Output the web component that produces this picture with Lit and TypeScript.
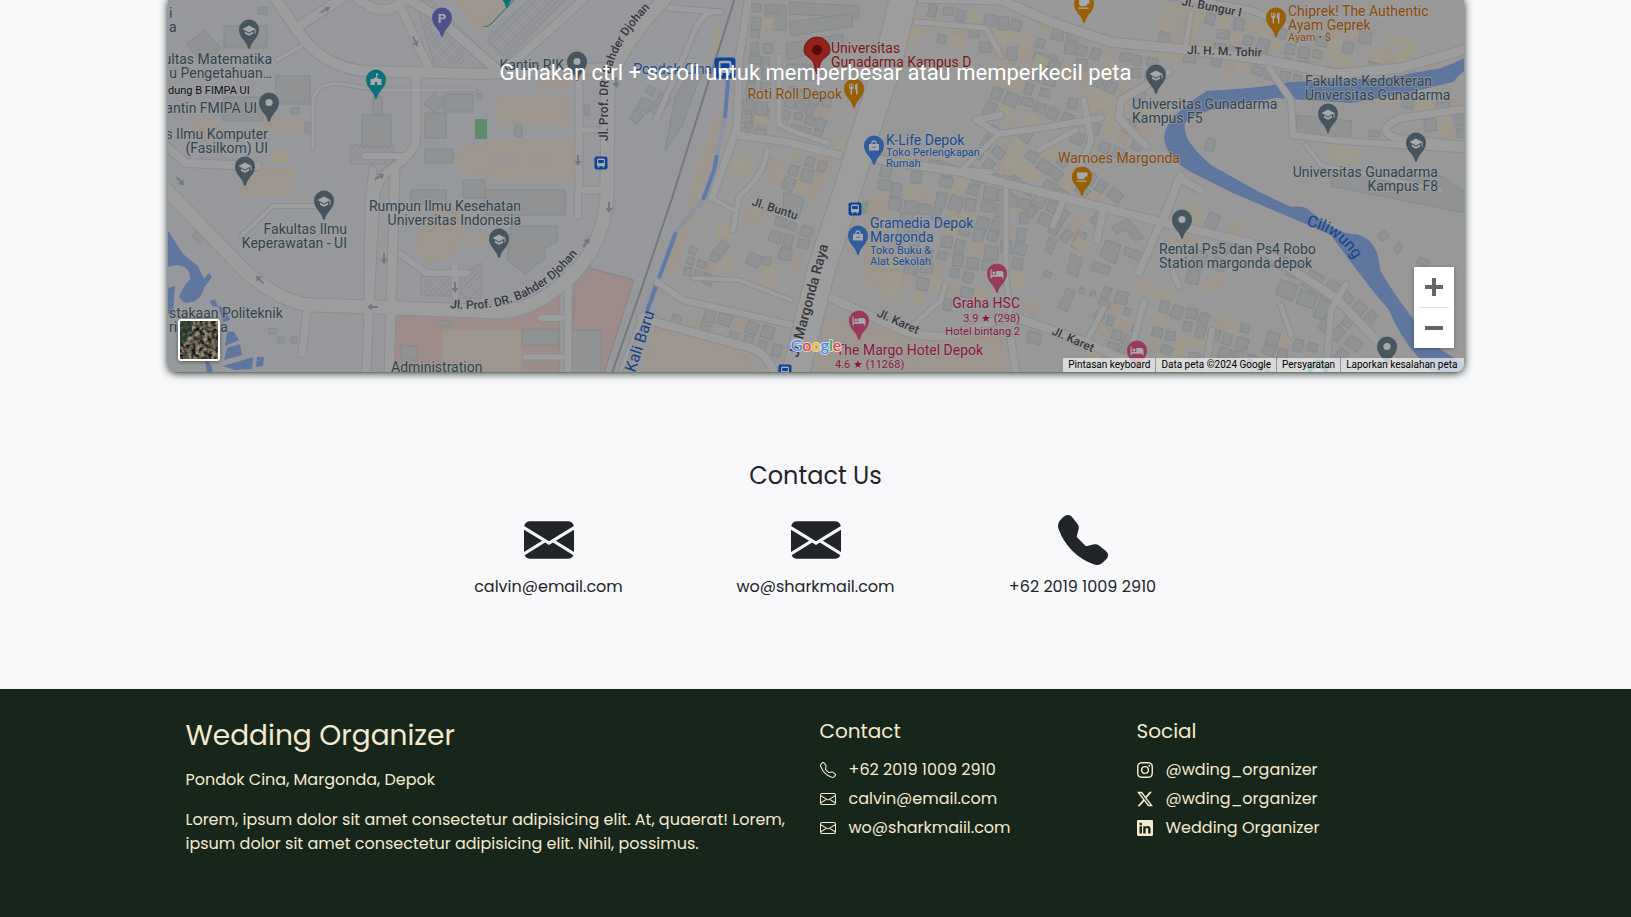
import { LitElement, html, svg, css } from "lit";
import { customElement } from "lit/decorators.js";

type Kind = "grey" | "peach" | "gold";
interface Block { x: number; y: number; cols: number; rows: number; size: number; rot: number; seed: number; gold: number; }
interface Label { x: number; y: number; t: string; c: string; a?: string; s?: string; r?: number; }
interface Pin { x: number; y: number; c: string; i: string; }

const roads: [string, number][] = [
  ["M272 -5 L296 30 Q322 68 365 71 L480 74 L610 68", 10],
  ["M298 26 L348 -6", 9],
  ["M352 -6 Q380 22 404 0 L412 -8", 9],
  ["M398 4 L430 73", 8],
  ["M402 -4 L432 14 L500 73", 9],
  ["M500 73 L560 20 L590 -8", 8],
  ["M415 76 V140 Q414 152 392 168 Q376 176 374 200 L365 376", 8],
  ["M364 156 H402", 6],
  ["M372 170 L368 200 L366 376", 7],
  ["M394 172 L388 376", 9],
  ["M312 148 V100 Q316 82 340 84 L380 90 H474", 3],
  ["M158 182 L245 272 Q282 303 310 305 L372 307 L500 312 Q530 310 560 285 Q602 252 606 196 L607 92 Q612 52 668 -6", 13],
  ["M158 140 L185 163 L256 166", 8],
  ["M306 310 L301 353", 7],
  ["M578 76 V190 H600", 7],
  ["M580 130 H606", 5],
  ["M567 270 V380", 7],
  ["M540 318 H562", 6],
  ["M524 357 H562", 5],
  ["M400 254 L425 273 H466", 6],
  ["M454 266 V296", 7],
  ["M577 216 V192", 6],
  ["M748 -5 L738 60 L736 128 L711 198", 7],
  ["M657 282 L638 325 L616 380", 4],
  ["M668 8 L720 12 Q700 8 690 40 L655 120", 5],
  ["M736 135 L785 142 L838 155", 7],
  ["M766 150 Q764 175 738 196 L732 230", 5],
  ["M711 198 L736 212", 4],
  ["M656 282 L682 300 L795 326", 6],
  ["M640 318 L750 348 Q770 355 775 380", 8],
  ["M778 56 V124 Q790 132 828 143", 5],
  ["M693 278 L738 280 L790 300", 4],
  ["M915 -2 L1000 0 L1050 22 L1110 42 L1190 50 L1265 60 L1335 74 L1400 68 L1470 48", 9],
  ["M915 22 L985 28 L1000 56", 5],
  ["M1165 -5 L1250 10 L1295 30", 6],
  ["M1190 14 L1184 50", 5],
  ["M1168 72 L1120 100 L1118 118 L1145 146", 7],
  ["M1083 100 L1090 140 L1075 180", 6],
  ["M1000 115 L975 120 L998 134 L1040 128 L1100 118", 6],
  ["M998 134 L960 170 L990 172", 5],
  ["M880 160 L960 172 L1040 192 L1160 222 L1250 243 L1335 298 L1385 350 L1410 380", 8],
  ["M1180 176 L1160 222 L1138 272", 7],
  ["M1200 190 L1178 178 L1165 215", 7],
  ["M1038 150 L1075 130", 5],
  ["M1102 212 L1096 240", 7],
  ["M1064 196 L1052 226", 6],
  ["M1345 284 L1330 310 L1325 372", 6],
  ["M830 298 L905 332 Q945 342 965 330 L1010 316 L1080 340 L1150 372", 8],
  ["M905 332 L940 300 L944 285", 5],
  ["M1005 190 V280 L1010 316", 5],
  ["M1010 340 L1016 380", 7],
  ["M1143 302 L1130 350", 6],
  ["M1103 308 L1085 342", 5],
  ["M1178 286 L1172 272", 6],
  ["M1280 306 L1290 335", 5],
  ["M1211 330 L1204 372", 6],
  ["M1268 68 L1290 100 L1292 135 L1330 140 L1470 150", 6],
  ["M1470 108 L1400 118 Q1372 130 1395 138 L1470 146", 7],
  ["M1305 145 L1320 165 L1440 190", 4],
  ["M240 236 L272 206 L330 206", 4],
  ["M276 60 L300 46", 4],
];

const shapes: [string, Kind | "pink" | "lot"][] = [
  ["M223 26 H266 V48 H223 Z", "grey"],
  ["M186 44 L203 30 L220 48 L203 66 Z", "grey"],
  ["M257 7 h9 v7 h-9 Z", "grey"],
  ["M275 76 H309 V104 H275 Z", "grey"],
  ["M222 97 H262 V121 H222 Z", "grey"],
  ["M290 108 h8 v6 h-8 Z", "grey"],
  ["M304 122 h6 v11 h-6 Z", "grey"],
  ["M361 115 H390 V147 H361 Z", "grey"],
  ["M372 96 H381 V115 H372 Z", "grey"],
  ["M242 169 H292 V195 H242 Z", "peach"],
  ["M262 120 H299 V132 H262 Z", "peach"],
  ["M188 128 L203 116 L222 130 L206 142 Z", "peach"],
  ["M272 152 h14 v9 h-14 Z", "gold"],
  ["M423 104 L434 93 L444 102 L434 113 Z", "grey"],
  ["M443 94 H472 V112 H443 Z", "grey"],
  ["M424 113 H445 V138 H424 Z", "grey"],
  ["M424 149 H452 V163 H424 Z", "grey"],
  ["M476 94 h5 v5 h-5 Z", "grey"],
  ["M514 126 h7 v11 h-7 Z", "grey"],
  ["M583 105 h5 v10 h-5 Z", "grey"],
  ["M497 96 H567 V124 H497 Z", "peach"],
  ["M533 88 L578 46 V72 L566 88 Z", "peach"],
  ["M455 160 L465 147 L492 142 V140 H573 V181 H492 V177 L465 172 Z", "peach"],
  ["M493 156 h20 v8 h-20 Z M529 156 h18 v8 h-18 Z", "lot"],
  ["M462 180 H484 V198 H462 Z", "grey"],
  ["M484 190 H564 V215 H484 Z", "grey"],
  ["M410 190 H445 V204 H410 Z", "grey"],
  ["M510 226 H556 V242 L544 248 V258 L524 274 L506 260 Z", "grey"],
  ["M466 234 h21 v10 h-21 Z", "peach"],
  ["M414 240 L430 216 L440 200 L462 214 L460 240 L448 258 L425 263 Z", "peach"],
  ["M191 236 L197 228 L206 236 L199 243 Z", "grey"],
  ["M387 313 L512 317 L558 284 V376 H383 Z", "pink"],
  ["M574 264 L633 280 L602 376 H572 V330 L574 264 Z", "pink"],
  ["M442 330 H520 V376 H442 Z", "peach"],
  ["M521 329 H557 V345 H521 Z", "grey"],
  ["M400 346 h16 v14 h-16 Z", "grey"],
  ["M439 321 h11 v5 h-11 Z", "grey"],
  ["M571 330 H600 V376 H571 Z", "grey"],
  ["M268 328 h7 v6 h-7 Z M277 337 h6 v6 h-6 Z M290 337 h6 v6 h-6 Z", "grey"],
  ["M454 0 H510 L478 30 Z", "peach"],
  ["M764 5 H785 V30 H764 Z", "grey"],
  ["M788 2 L858 6 V18 L788 14 Z", "grey"],
  ["M788 22 L850 14 L852 26 L790 36 Z", "grey"],
  ["M785 44 L842 34 L842 46 L786 60 Z", "grey"],
  ["M786 64 H816 V80 H786 Z", "grey"],
  ["M674 98 L690 68 L700 74 L680 128 L664 150 Z", "grey"],
  ["M740 15 L749 16 L744 41 L736 39 Z", "gold"],
  ["M716 27 L722 29 L714 53 L709 50 Z", "gold"],
  ["M714 116 L726 118 L692 206 L686 200 Z", "peach"],
  ["M688 206 L694 208 L672 276 L664 270 Z", "peach"],
  ["M655 326 L740 350 L760 376 H642 Z", "peach"],
  ["M870 200 L890 206 L882 246 L895 252 L884 290 L862 280 Z", "peach"],
  ["M822 315 L930 342 L918 376 H818 Z", "peach"],
  ["M922 338 L1000 336 L1004 376 H915 Z", "peach"],
  ["M1296 115 L1351 121 L1349 139 L1295 134 Z", "grey"],
  ["M1330 146 L1356 150 L1354 164 L1328 158 Z", "gold"],
  ["M1330 172 L1440 176 L1470 196 V214 L1400 200 L1330 186 Z", "grey"],
  ["M1207 138 l8 2 l-3 12 l-9 -3 Z M1368 131 h11 v6 h-11 Z", "grey"],
  ["M1377 234 l7 -4 l4 8 l-8 3 Z M1393 250 l5 -8 l4 3 l-5 9 Z M1415 262 l4 -5 l10 4 l-4 7 Z", "grey"],
  ["M766 157 L785 163 L784 183 L768 184 Z", "peach"],
  ["M737 155 L752 162 L744 177 L729 170 Z", "gold"],
  ["M839 137 L852 141 L847 159 L834 155 Z", "gold"],
  ["M810 155 L832 161 L827 180 L809 174 Z", "peach"],
  ["M783 192 L803 198 L798 218 L781 214 Z", "grey"],
  ["M747 203 L764 207 L758 227 L743 220 Z", "peach"],
  ["M719 224 L728 225 L726 240 L717 236 Z", "gold"],
  ["M722 239 L729 246 L718 260 L711 252 Z", "grey"],
  ["M724 258 L733 259 L730 273 L722 272 Z", "gold"],
  ["M763 265 L775 269 L770 287 L759 282 Z", "gold"],
  ["M1076 230 L1086 234 L1079 251 L1070 247 Z", "grey"],
  ["M1105 240 L1120 245 L1114 264 L1099 256 Z", "grey"],
  ["M1070 254 L1082 258 L1076 277 L1066 273 Z", "grey"],
  ["M1092 261 L1110 267 L1107 275 L1090 270 Z", "grey"],
  ["M1066 288 L1074 292 L1066 312 L1057 308 Z", "grey"],
  ["M1124 247 L1143 253 L1140 261 L1123 255 Z", "grey"],
  ["M1048 237 L1056 240 L1050 255 L1044 251 Z", "grey"],
  ["M1111 227 L1127 219 L1143 238 L1134 241 L1124 230 L1115 234 Z", "grey"],
  ["M1044 270 l7 3 l-2 5 l-7 -3 Z M1080 287 l4 2 l-2 5 l-4 -2 Z M1091 290 l4 2 l-2 5 l-4 -2 Z", "grey"],
  ["M1137 281 L1173 296 L1170 301 L1135 290 Z", "gold"],
  ["M1027 331 L1041 334 L1039 345 L1026 342 Z", "grey"],
  ["M1027 300 L1038 304 L1033 315 L1023 311 Z", "peach"],
  ["M1007 272 H1022 V287 H1007 Z", "gold"],
];

const blocks: Block[] = [
  { x: 752, y: 4, cols: 2, rows: 10, size: 13, rot: 4, seed: 3, gold: 0.1 },
  { x: 788, y: 86, cols: 4, rows: 4, size: 12, rot: 14, seed: 21, gold: 0 },
  { x: 742, y: 100, cols: 2, rows: 3, size: 14, rot: 6, seed: 5, gold: 0.3 },
  { x: 794, y: 152, cols: 3, rows: 3, size: 13, rot: 20, seed: 8, gold: 0.2 },
  { x: 762, y: 212, cols: 4, rows: 4, size: 14, rot: 18, seed: 13, gold: 0.12 },
  { x: 690, y: 246, cols: 3, rows: 3, size: 11, rot: 16, seed: 17, gold: 0 },
  { x: 676, y: 300, cols: 8, rows: 2, size: 15, rot: 16, seed: 19, gold: 0.05 },
  { x: 915, y: 2, cols: 18, rows: 3, size: 14, rot: 10, seed: 31, gold: 0.2 },
  { x: 1008, y: 44, cols: 11, rows: 5, size: 15, rot: 20, seed: 37, gold: 0.2 },
  { x: 1168, y: -10, cols: 20, rows: 5, size: 14, rot: 12, seed: 41, gold: 0.35 },
  { x: 1000, y: 112, cols: 10, rows: 5, size: 15, rot: 34, seed: 43, gold: 0.1 },
  { x: 884, y: 150, cols: 9, rows: 4, size: 15, rot: 12, seed: 47, gold: 0.15 },
  { x: 900, y: 212, cols: 7, rows: 6, size: 15, rot: 12, seed: 53, gold: 0.15 },
  { x: 1006, y: 196, cols: 2, rows: 5, size: 15, rot: 8, seed: 59, gold: 0.2 },
  { x: 1104, y: 286, cols: 4, rows: 3, size: 13, rot: 20, seed: 61, gold: 0.1 },
  { x: 1100, y: 325, cols: 3, rows: 3, size: 13, rot: 20, seed: 63, gold: 0.2 },
  { x: 1190, y: 205, cols: 3, rows: 4, size: 20, rot: 20, seed: 67, gold: 0.15 },
  { x: 1160, y: 300, cols: 12, rows: 5, size: 14, rot: 16, seed: 71, gold: 0.25 },
  { x: 1270, y: 250, cols: 4, rows: 2, size: 22, rot: 26, seed: 73, gold: 0.1 },
  { x: 1345, y: 290, cols: 3, rows: 4, size: 16, rot: 38, seed: 79, gold: 0.2 },
  { x: 1420, y: 105, cols: 3, rows: 3, size: 15, rot: -10, seed: 83, gold: 0.3 },
  { x: 648, y: 85, cols: 2, rows: 3, size: 14, rot: 30, seed: 91, gold: 0 },
];

const houses = (b: Block) => {
  let s = b.seed * 9301;
  const next = () => { s = (s * 9301 + 49297) % 233280; return s / 233280; };
  const out = [];
  for (let r = 0; r < b.rows; r++) {
    for (let c = 0; c < b.cols; c++) {
      const skip = next() < 0.16;
      const w = Math.round(b.size * (0.55 + next() * 0.35));
      const h = Math.round(b.size * (0.55 + next() * 0.4));
      const n = next();
      const kind: Kind = n < b.gold ? "gold" : n < b.gold + 0.16 ? "peach" : "grey";
      const turn = Math.round(next() * 16 - 8);
      if (skip) continue;
      const px = c * b.size, py = r * b.size;
      out.push(svg`<rect class=${kind} x=${px} y=${py} width=${w} height=${h} transform="rotate(${turn} ${px} ${py})"></rect>`);
    }
  }
  return svg`<g transform="translate(${b.x} ${b.y}) rotate(${b.rot})">${out}</g>`;
};

const SLATE = "slate", ORANGE = "orange", BLUE = "blue", PINK = "rose", RED = "red", ROAD = "road";

const labels: Label[] = [
  { x: 168, y: 18, t: "i", c: SLATE }, { x: 168, y: 32, t: "a", c: SLATE },
  { x: 271, y: 64, t: "ultas Matematika", c: SLATE, a: "end" },
  { x: 271, y: 78, t: "u Pengetahuan…", c: SLATE, a: "end" },
  { x: 167, y: 94, t: "dung B FIMPA UI", c: "black", s: "s11" },
  { x: 256, y: 113, t: "antin FMIPA UI", c: SLATE, a: "end" },
  { x: 267, y: 139, t: "s Ilmu Komputer", c: SLATE, a: "end" },
  { x: 267, y: 153, t: "(Fasilkom) UI", c: SLATE, a: "end" },
  { x: 346, y: 234, t: "Fakultas Ilmu", c: SLATE, a: "end" },
  { x: 346, y: 248, t: "Keperawatan - UI", c: SLATE, a: "end" },
  { x: 520, y: 211, t: "Rumpun Ilmu Kesehatan", c: SLATE, a: "end" },
  { x: 520, y: 225, t: "Universitas Indonesia", c: SLATE, a: "end" },
  { x: 168, y: 318, t: "stakaan Politeknik", c: SLATE },
  { x: 168, y: 332, t: "ri Jakarta", c: SLATE },
  { x: 390, y: 372, t: "Administration", c: SLATE },
  { x: 563, y: 70, t: "Kantin RIK", c: SLATE, a: "end" },
  { x: 711, y: 74, t: "Pondok Cina", c: BLUE, a: "end" },
  { x: 830, y: 53, t: "Universitas", c: RED },
  { x: 830, y: 67, t: "Gunadarma Kampus D", c: RED },
  { x: 841, y: 99, t: "Roti Roll Depok", c: ORANGE, a: "end" },
  { x: 885, y: 145, t: "K-Life Depok", c: BLUE },
  { x: 885, y: 156, t: "Toko Perlengkapan", c: BLUE, s: "s11" },
  { x: 885, y: 167, t: "Rumah", c: BLUE, s: "s11" },
  { x: 869, y: 228, t: "Gramedia Depok", c: BLUE },
  { x: 869, y: 242, t: "Margonda", c: BLUE },
  { x: 869, y: 254, t: "Toko Buku &", c: BLUE, s: "s11" },
  { x: 869, y: 265, t: "Alat Sekolah", c: BLUE, s: "s11" },
  { x: 1019, y: 308, t: "Graha HSC", c: PINK, a: "end" },
  { x: 1019, y: 322, t: "3.9 ★ (298)", c: PINK, a: "end", s: "s11" },
  { x: 1019, y: 335, t: "Hotel bintang 2", c: PINK, a: "end", s: "s11" },
  { x: 835, y: 355, t: "The Margo Hotel Depok", c: PINK },
  { x: 834, y: 368, t: "4.6 ★ (11268)", c: PINK, s: "s11" },
  { x: 1287, y: 16, t: "Chiprek! The Authentic", c: ORANGE },
  { x: 1287, y: 30, t: "Ayam Geprek", c: ORANGE },
  { x: 1287, y: 41, t: "Ayam • $", c: ORANGE, s: "s11" },
  { x: 1057, y: 163, t: "Warnoes Margonda", c: ORANGE },
  { x: 1131, y: 109, t: "Universitas Gunadarma", c: SLATE },
  { x: 1131, y: 123, t: "Kampus F5", c: SLATE },
  { x: 1304, y: 86, t: "Fakultas Kedokteran", c: SLATE },
  { x: 1304, y: 100, t: "Universitas Gunadarma", c: SLATE },
  { x: 1437, y: 177, t: "Universitas Gunadarma", c: SLATE, a: "end" },
  { x: 1437, y: 191, t: "Kampus F8", c: SLATE, a: "end" },
  { x: 1158, y: 254, t: "Rental Ps5 dan Ps4 Robo", c: SLATE },
  { x: 1158, y: 268, t: "Station margonda depok", c: SLATE },
  { x: 1186, y: 54, t: "Jl. H. M. Tohir", c: ROAD, s: "s12", r: 2 },
  { x: 1180, y: 5, t: "Jl. Bungur I", c: ROAD, s: "s12", r: 11 },
  { x: 750, y: 205, t: "Jl. Buntu", c: ROAD, s: "s12", r: 18 },
  { x: 875, y: 316, t: "Jl. Karet", c: ROAD, s: "s12", r: 24 },
  { x: 1050, y: 334, t: "Jl. Karet", c: ROAD, s: "s12", r: 24 },
  { x: 1240, y: 364, t: "Jl. Karet", c: ROAD, s: "s12", r: 24 },
];

const pins: Pin[] = [
  { x: 248, y: 48, c: SLATE, i: "cap" }, { x: 268, y: 121, c: SLATE, i: "dot" },
  { x: 244, y: 185, c: SLATE, i: "cap" }, { x: 323, y: 219, c: SLATE, i: "cap" },
  { x: 375, y: 98, c: "teal", i: "school" }, { x: 441, y: 36, c: "indigo", i: "park" },
  { x: 506, y: 7, c: "teal", i: "none" }, { x: 576, y: 80, c: SLATE, i: "dot" },
  { x: 498, y: 257, c: SLATE, i: "cap" }, { x: 853, y: 107, c: ORANGE, i: "fork" },
  { x: 873, y: 164, c: BLUE, i: "bag" }, { x: 857, y: 254, c: BLUE, i: "bag" },
  { x: 996, y: 292, c: PINK, i: "bed" }, { x: 858, y: 339, c: PINK, i: "bed" },
  { x: 1136, y: 369, c: PINK, i: "bed" }, { x: 1083, y: 22, c: ORANGE, i: "cup" },
  { x: 1275, y: 36, c: ORANGE, i: "fork" }, { x: 1081, y: 195, c: ORANGE, i: "cup" },
  { x: 1155, y: 93, c: SLATE, i: "cap" }, { x: 1327, y: 132, c: SLATE, i: "cap" },
  { x: 1415, y: 161, c: SLATE, i: "cap" }, { x: 1181, y: 238, c: SLATE, i: "dot" },
  { x: 1386, y: 365, c: SLATE, i: "dot" }, { x: 1317, y: 388, c: "teal", i: "school" },
];

const glyph = (i: string) => {
  switch (i) {
    case "cap": return svg`<path d="M-6.500 -19 L0 -22.500 L6.500 -19 L0 -15.500 Z M-4 -16.500 L0 -14.200 L4 -16.500 V-14.300 L0 -12.200 L-4 -14.300 Z M5.500 -19 H6.500 V-14.500 H5.500 Z"></path>`;
    case "dot": return svg`<circle cx="0" cy="-18.500" r="3.600"></circle>`;
    case "park": return svg`<text class="park" x="0" y="-13.500" text-anchor="middle">P</text>`;
    case "school": return svg`<path d="M-5.500 -13 V-19 H-3 L0 -21 V-25 L3 -23.500 L1 -22.500 V-21 L3 -19 H5.500 V-13 H1.200 V-16 H-1.200 V-13 Z"></path>`;
    case "fork": return svg`<path d="M-4.800 -23.500 H-3.900 V-20 H-3.100 V-23.500 H-2.200 V-20 H-1.400 V-23.500 H-0.500 V-19.500 Q-0.600 -18 -2 -17.800 V-12.500 H-3.400 V-17.800 Q-4.800 -18 -4.800 -19.500 Z M2 -12.500 V-17.500 H0.900 V-21 Q1.200 -23.400 3.500 -23.700 V-12.500 Z"></path>`;
    case "cup": return svg`<path d="M-5 -22.500 H5.500 V-18.500 H3.500 Q3.200 -16 0 -15.800 H-2 Q-4.800 -16 -5 -18.500 Z M-5.500 -14.500 H4.500 V-13.300 H-5.500 Z"></path>`;
    case "bag": return svg`<path fill-rule="evenodd" d="M-5 -20 H-2.800 Q-2.800 -23.800 0 -23.800 Q2.800 -23.800 2.800 -20 H5 V-13.500 H-5 Z M-1.600 -20 H1.600 Q1.600 -22.500 0 -22.500 Q-1.600 -22.500 -1.600 -20 Z M-2.500 -18 Q0 -14 2.500 -18 Q0 -16 -2.500 -18 Z"></path>`;
    case "bed": return svg`<path d="M-6.500 -22.500 H-5.300 V-17 H-0.800 V-21 H4 Q6.500 -21 6.500 -18 V-13.500 H5.300 V-15.300 H-5.300 V-13.500 H-6.500 Z"></path><circle cx="-3" cy="-19" r="1.600"></circle>`;
    default: return null;
  }
};

const pin = (p: Pin) => svg`<g class="pin" transform="translate(${p.x} ${p.y})">
  <path class="${p.c}" d="M0 1 C-0.800 1 -1.200 0 -1.500 -1.500 C-2.800 -7 -10 -10.500 -10 -18.500 A10 10 0 0 1 10 -18.500 C10 -10.500 2.800 -7 1.500 -1.500 C1.200 0 0.800 1 0 1 Z"></path>
  <g class="glyph">${glyph(p.i)}</g></g>`;

const stop = (x: number, y: number, s: number) => svg`<g transform="translate(${x} ${y}) scale(${s})">
  <rect class="stop" x="-6.500" y="-6.500" width="13" height="13" rx="2"></rect>
  <path class="stopicon" fill-rule="evenodd" d="M-4 -3 Q-4 -4.500 -2.500 -4.500 H2.500 Q4 -4.500 4 -3 V3.200 H3 V4.500 H1.600 V3.200 H-1.600 V4.500 H-3 V3.200 H-4 Z M-2.800 -3 V0 H2.800 V-3 Z"></path></g>`;

const arrow = (x: number, y: number, r: number) =>
  svg`<path class="arrow" transform="translate(${x} ${y}) rotate(${r})" d="M-5 -1 H1 V-3.500 L6 0 L1 3.500 V1 H-5 Z"></path>`;

const mapDrawing = () => svg`
  <defs>
    <pattern id="hatch" width="4" height="4" patternUnits="userSpaceOnUse" patternTransform="rotate(-45)">
      <path d="M0 2 H4" stroke="#85878b" stroke-width="0.700"></path>
    </pattern>
    <path id="bahder" d="M449 308 Q504 314 544 285 Q564 272 591 235"></path>
    <path id="bahderUp" d="M607 141 V98 Q605 50 655 2"></path>
    <path id="ciliwung" d="M1305 226 Q1341 232 1359 270"></path>
  </defs>
  <rect class="urban" x="160" y="0" width="1310" height="372"></rect>
  <path class="campus" d="M160 0 H745 L736 60 L690 190 L630 376 H160 Z"></path>
  <path class="park-line" d="M456 -2 L480 24 Q484 29 490 24 L515 -2"></path>
  <path class="hatch" d="M414 0 L430 0 L494 62 L470 70 L435 70 Z M485 40 L530 -2 H566 L506 60 Z M350 145 H392 V164 H350 Z M420 275 H454 V296 H420 Z M460 276 L480 262 V298 H460 Z"></path>
  ${shapes.map(([d, k]) => svg`<path class=${k} d=${d}></path>`)}
  ${blocks.map(houses)}
  <path class="green" d="M474 119 H486 V139 H474 Z"></path>
  <path class="green" d="M862 202 L868 200 L866 214 L860 214 Z" opacity="0.400"></path>
  <path class="water" d="M160 222 L168 232 L182 254 L197 266 L203 279 L208 273 L211 277 L203 288 Q199 303 184 303 L178 297 Q183 284 189 280 Q190 266 176 265 L160 268 Z M160 290 L174 286 L172 312 L160 318 Z M209 301 L214 299 L217 307 L211 306 Z M217 305 L225 310 L229 320 L222 322 Z M226 331 L233 332 L238 340 L224 346 Z M226 348 L239 344 L241 355 L223 360 Z M222 366 L252 357 L251 369 L234 370 Z M256 357 L263 357 L262 366 L255 367 Z M204 360 Q213 364 211 374 H206 Z"></path>
  <path class="pool" d="M1470 55 L1455 62 L1440 68 L1385 78 L1290 82 Q1262 88 1206 91 Q1165 116 1163 137 Q1165 158 1190 172 L1232 193 L1300 222 L1330 235 Q1362 280 1388 310 Q1402 345 1432 372 H1470 V366 Q1430 350 1410 316 Q1390 290 1379 270 Q1378 240 1355 234 Q1340 236 1310 212 Q1305 205 1290 207 L1258 192 L1210 165 Q1180 140 1184 123 Q1192 113 1220 108 L1275 98 L1350 103 Q1400 95 1452 82 Q1460 72 1470 66 Z"></path>
  ${roads.map(([d, w]) => svg`<path class="casing" d=${d} stroke-width=${w + 2}></path>`)}
  ${roads.map(([d, w]) => svg`<path class="street" d=${d} stroke-width=${w}></path>`)}
  <path class="canal" d="M727 80 L724 118 M716 155 L713 170 L702 200 M675 232 L658 278 M655 286 L645 314"></path>
  <path class="canal faint" d="M724 118 L716 155 M702 200 L675 232"></path>
  <path class="casing" d="M903 -5 L888 60 L862 140 L845 195 L820 270 L793 380" stroke-width="29"></path>
  <path class="avenue" d="M903 -5 L888 60 L862 140 L845 195 L820 270 L793 380" stroke-width="27"></path>
  <path class="rail" d="M734 -2 L708 80 L672 195 L640 290 L610 376"></path>
  ${[[324, 10, -30], [414, 41, 65], [378, 177, -30], [577, 160, 90], [179, 181, 48], [259, 280, -135], [383, 258, 90], [372, 307, 180], [454, 287, 90], [585, 243, -55], [608, 207, 90], [615, 82, 90]].map(([x, y, r]) => arrow(x, y, r))}
  ${stop(600, 163, 1)}${stop(854, 209, 1)}${stop(784, 371, 1)}${stop(724, 68, 1.6)}
  ${labels.map((l) => svg`<text class="label ${l.c} ${l.s ?? "s14"}" x=${l.x} y=${l.y} text-anchor=${l.a ?? "start"} transform="rotate(${l.r ?? 0} ${l.x} ${l.y})">${l.t}</text>`)}
  <text class="label road s12"><textPath href="#bahder">Jl. Prof. DR. Bahder Djohan</textPath></text>
  <text class="label road s12"><textPath href="#bahderUp">Jl. Prof. DR. Bahder Djohan</textPath></text>
  <text class="label water-name s16"><textPath href="#ciliwung">Ciliwung</textPath></text>
  <text class="label water-name s16" transform="translate(634 373) rotate(-72)">Kali Baru</text>
  <text class="label road s14" transform="translate(797 358) rotate(-75)">Jl. Margonda Raya</text>
  ${pins.map(pin)}
  <path class="main-pin" d="M816 74 C815 74 814 66 812 62 C809 57 803 56 803 50 A13 13 0 0 1 829 50 C829 56 823 57 820 62 C818 66 817 74 816 74 Z"></path>
  <circle class="main-dot" cx="816" cy="50" r="5"></circle>`;

const icon = (name: string, cls: string) => {
  const d: Record<string, string> = {
    mailFill: "M.05 3.555A2 2 0 0 1 2 2h12a2 2 0 0 1 1.950 1.555L8 8.414zM0 4.697v7.104l5.803-3.558zM6.761 8.830l-6.570 4.027A2 2 0 0 0 2 14h12a2 2 0 0 0 1.808-1.144l-6.570-4.027L8 9.586zm3.436-.586L16 11.801V4.697z",
    phoneFill: "M1.885.511a1.745 1.745 0 0 1 2.610.163L6.290 2.980c.329.423.445.974.315 1.494l-.547 2.190a.680.680 0 0 0 .178.643l2.457 2.457a.680.680 0 0 0 .644.178l2.189-.547a1.750 1.750 0 0 1 1.494.315l2.306 1.794c.829.645.905 1.870.163 2.611l-1.034 1.034c-.740.740-1.846 1.065-2.877.702a18.600 18.600 0 0 1-7.010-4.420 18.600 18.600 0 0 1-4.420-7.009c-.362-1.030-.037-2.137.703-2.877z",
    phone: "M3.654 1.328a.678.678 0 0 0-1.015-.063L1.605 2.300c-.483.484-.661 1.169-.450 1.770a17.600 17.600 0 0 0 4.168 6.608 17.600 17.600 0 0 0 6.608 4.168c.601.211 1.286.033 1.770-.450l1.034-1.034a.678.678 0 0 0-.063-1.015l-2.307-1.794a.680.680 0 0 0-.580-.122l-2.190.547a1.750 1.750 0 0 1-1.657-.459L5.482 8.062a1.750 1.750 0 0 1-.460-1.657l.548-2.190a.680.680 0 0 0-.122-.580zM1.884.511a1.745 1.745 0 0 1 2.612.163L6.290 2.980c.329.423.445.974.315 1.494l-.547 2.190a.680.680 0 0 0 .178.643l2.457 2.457a.680.680 0 0 0 .644.178l2.189-.547a1.750 1.750 0 0 1 1.494.315l2.306 1.794c.829.645.905 1.870.163 2.611l-1.034 1.034c-.740.740-1.846 1.065-2.877.702a18.600 18.600 0 0 1-7.010-4.420 18.600 18.600 0 0 1-4.420-7.009c-.362-1.030-.037-2.137.703-2.877z",
    mail: "M0 4a2 2 0 0 1 2-2h12a2 2 0 0 1 2 2v8a2 2 0 0 1-2 2H2a2 2 0 0 1-2-2zm2-1a1 1 0 0 0-1 1v.217l7 4.200 7-4.200V4a1 1 0 0 0-1-1zm13 2.383-4.708 2.825L15 11.105zm-.034 6.876-5.640-3.471L8 9.583l-1.326-.795-5.640 3.470A1 1 0 0 0 2 13h12a1 1 0 0 0 .966-.741M1 11.105l4.708-2.897L1 5.383z",
    instagram: "M8 0C5.829 0 5.556.01 4.703.048 3.850.088 3.269.222 2.760.420a3.900 3.900 0 0 0-1.417.923A3.900 3.900 0 0 0 .420 2.760C.222 3.268.087 3.850.048 4.700.010 5.555 0 5.827 0 8.001c0 2.172.010 2.444.048 3.297.040.852.174 1.433.372 1.942.205.526.478.972.923 1.417.444.445.890.719 1.416.923.510.198 1.090.333 1.942.372C5.555 15.990 5.827 16 8 16s2.444-.010 3.298-.048c.851-.040 1.434-.174 1.943-.372a3.900 3.900 0 0 0 1.416-.923c.445-.445.718-.891.923-1.417.197-.509.332-1.090.372-1.942C15.990 10.445 16 10.173 16 8s-.010-2.445-.048-3.299c-.040-.851-.175-1.433-.372-1.941a3.900 3.900 0 0 0-.923-1.417A3.900 3.900 0 0 0 13.240.420c-.510-.198-1.092-.333-1.943-.372C10.443.010 10.172 0 7.998 0zm-.717 1.442h.718c2.136 0 2.389.007 3.232.046.780.035 1.204.166 1.486.275.373.145.640.319.920.599s.453.546.598.920c.110.281.240.705.275 1.485.039.843.047 1.096.047 3.231s-.008 2.389-.047 3.232c-.035.780-.166 1.203-.275 1.485a2.500 2.500 0 0 1-.599.919c-.280.280-.546.453-.920.598-.280.110-.704.240-1.485.276-.843.038-1.096.047-3.232.047s-2.390-.009-3.233-.047c-.780-.036-1.203-.166-1.485-.276a2.500 2.500 0 0 1-.920-.598 2.500 2.500 0 0 1-.600-.920c-.109-.281-.240-.705-.275-1.485-.038-.843-.046-1.096-.046-3.233s.008-2.388.046-3.231c.036-.780.166-1.204.276-1.486.145-.373.319-.640.599-.920s.546-.453.920-.598c.282-.110.705-.240 1.485-.276.738-.034 1.024-.044 2.515-.045zm4.988 1.328a.960.960 0 1 0 0 1.920.960.960 0 0 0 0-1.920m-4.270 1.122a4.109 4.109 0 1 0 0 8.217 4.109 4.109 0 0 0 0-8.217m0 1.441a2.667 2.667 0 1 1 0 5.334 2.667 2.667 0 0 1 0-5.334",
    x: "M12.600.750h2.454l-5.360 6.142L16 15.250h-4.937l-3.867-5.070-4.425 5.070H.316l5.733-6.570L0 .750h5.063l3.495 4.633L12.601.750Zm-.860 13.028h1.360L4.323 2.145H2.865z",
    linkedin: "M0 1.146C0 .513.526 0 1.175 0h13.650C15.474 0 16 .513 16 1.146v13.708c0 .633-.526 1.146-1.175 1.146H1.175C.526 16 0 15.487 0 14.854zm4.943 12.248V6.169H2.542v7.225zm-1.200-8.212c.837 0 1.358-.554 1.358-1.248-.015-.709-.520-1.248-1.342-1.248S2.400 3.226 2.400 3.934c0 .694.521 1.248 1.327 1.248zm4.908 8.212V9.359c0-.216.016-.432.080-.586.173-.431.568-.878 1.232-.878.869 0 1.216.662 1.216 1.634v3.865h2.401V9.250c0-2.220-1.184-3.252-2.764-3.252-1.274 0-1.845.700-2.165 1.193v.025h-.016l.016-.025V6.169h-2.400c.030.678 0 7.225 0 7.225z",
  };
  return html`<svg class=${cls} viewBox="0 0 16 16" fill="currentColor" aria-hidden="true"><path d=${d[name]}></path></svg>`;
};

@customElement("map-view")
class MapView extends LitElement {
  static styles = css`
    :host { display: block; position: relative; overflow: hidden; height: 372px; font-family: Roboto, sans-serif; border-bottom: 1px solid #718072; border-radius: 0 0 8px 8px; box-shadow: 0 0 8px #14241b; }
    .map { display: block; width: 100%; height: 100%; }
    .urban { fill: #989898; }
    .campus { fill: #96989b; }
    .casing { fill: none; stroke: #8b8d91; stroke-linecap: round; stroke-linejoin: round; }
    .street, .avenue { fill: none; stroke: #9d9d9e; stroke-linecap: round; stroke-linejoin: round; }
    .grey { fill: #909293; stroke: #868a8c; stroke-width: 1px; }
    .peach { fill: #9c968f; stroke: #a29382; stroke-width: 1px; }
    .gold { fill: #9c9990; stroke: #a89a74; stroke-width: 1px; }
    .pink { fill: #9d8c89; stroke: #917f7d; stroke-width: 1px; }
    .lot { fill: #97979a; stroke: #a3917d; stroke-width: 1px; }
    .hatch { fill: url(#hatch); stroke: #8a8c91; stroke-width: 1px; }
    .green { fill: #5f8b6a; }
    .water, .pool { fill: #5f769f; }
    .canal { fill: none; stroke: #6079a8; stroke-width: 4px; }
    .faint { stroke: #8c92a2; }
    .rail { fill: none; stroke: #77787c; stroke-width: 2px; }
    .park-line { fill: none; stroke: #1e7439; stroke-width: 1px; }
    .arrow { fill: #74777f; }
    .label { paint-order: stroke; stroke: #a0a2a4; stroke-opacity: 0.6; stroke-width: 2px; stroke-linejoin: round; }
    .s11 { font-size: 11px; }
    .s12 { font-size: 12px; }
    .s14 { font-size: 14px; }
    .s16 { font-size: 16px; }
    .label.road { fill: #36383c; font-weight: 500; }
    .label.black { fill: #111111; }
    .water-name { fill: #164384; stroke-width: 0; }
    .slate { fill: #33444d; }
    .orange { fill: #8c4b05; }
    .blue { fill: #174c93; }
    .rose { fill: #8a1740; }
    .red { fill: #7f1515; }
    .pin .slate { fill: #46555e; }
    .pin .orange { fill: #985f05; }
    .pin .blue { fill: #305c9c; }
    .pin .rose { fill: #983a5c; }
    .pin .teal { fill: #0b717b; }
    .pin .indigo { fill: #4f508a; }
    .glyph { fill: #a6a9ab; }
    .park { font-size: 13px; font-weight: 700; }
    .stop { fill: #0c4394; }
    .stopicon { fill: #a6a9ab; }
    .main-pin { fill: #8f231e; stroke: #7a1814; stroke-width: 1px; }
    .main-dot { fill: #560b0b; }
    .hint { position: absolute; inset: 57px 0 auto; margin: 0; text-align: center; font-size: 22px; line-height: 32px; color: #ffffff; }
    .satellite { position: absolute; left: 10px; bottom: 11px; width: 42px; height: 42px; padding: 0; border: 2px solid #ffffff; border-radius: 3px; background: #4b4a3f; overflow: hidden; box-shadow: 0 1px 4px rgba(0, 0, 0, 0.4); cursor: pointer; }
    .satellite svg { display: block; width: 100%; height: 100%; }
    .zoom { position: absolute; right: 10px; bottom: 24px; width: 40px; display: flex; flex-direction: column; background: #ffffff; box-shadow: 0 1px 4px rgba(0, 0, 0, 0.3); }
    .zoom button { height: 40px; padding: 0; border: 0; background: none; cursor: pointer; display: grid; place-items: center; }
    .zoom svg { width: 18px; height: 18px; fill: #666666; }
    .zoom hr { width: 30px; height: 1px; margin: 0 auto; border: 0; background: #e0e0e0; }
    .logo { position: absolute; left: 0; right: 0; bottom: 13px; margin: 0 auto; width: 50px; height: 24px; overflow: visible; font: 500 16px Lato, sans-serif; }
    .logo text { paint-order: stroke; stroke: #d5d7da; stroke-width: 2px; }
    .g-blue { fill: #4285f4; }
    .g-red { fill: #ea4335; }
    .g-yellow { fill: #fbbc04; }
    .g-green { fill: #34a853; }
    .legal { position: absolute; right: 0; bottom: 0; display: flex; gap: 1px; font-size: 10px; line-height: 14px; }
    .legal > * { padding: 0 5px; border: 0; margin: 0; background: rgba(245, 245, 245, 0.7); color: #000000; font: inherit; text-decoration: none; white-space: nowrap; }
    .legal > :last-child { padding-right: 6px; }
  `;
  render() {
    return html`
      <svg class="map" viewBox="167 0 1296 372" preserveAspectRatio="xMidYMin slice" role="img" aria-label="Peta">${mapDrawing()}</svg>
      <p class="hint">Gunakan ctrl + scroll untuk memperbesar atau memperkecil peta</p>
      <svg class="logo" viewBox="0 0 50 24"><text x="25" y="16" text-anchor="middle"><tspan class="g-blue">G</tspan><tspan class="g-red">o</tspan><tspan class="g-yellow">o</tspan><tspan class="g-blue">g</tspan><tspan class="g-green">l</tspan><tspan class="g-red">e</tspan></text></svg>
      <button class="satellite" aria-label="Tampilkan gambar satelit">
        <svg viewBox="0 0 38 38">
          <filter id="ground" color-interpolation-filters="sRGB"><feTurbulence type="fractalNoise" baseFrequency="0.25" numOctaves="4" seed="4"></feTurbulence><feColorMatrix values="1 0.500 0 0 -0.400  0.900 0.500 0 0 -0.370  0.800 0.400 0 0 -0.320  0 0 0 0 1"></feColorMatrix></filter>
          <rect width="38" height="38" filter="url(#ground)"></rect>
          <path d="M0 0 H14 L10 14 L0 26 Z" fill="#1f3a2c" opacity="0.600"></path>
        </svg>
      </button>
      <div class="zoom">
        <button aria-label="Perbesar"><svg viewBox="0 0 18 18"><path d="M7 0 H11 V7 H18 V11 H11 V18 H7 V11 H0 V7 H7 Z"></path></svg></button>
        <hr />
        <button aria-label="Perkecil"><svg viewBox="0 0 18 18"><path d="M0 7 H18 V11 H0 Z"></path></svg></button>
      </div>
      <div class="legal"><button>Pintasan keyboard</button><span>Data peta ©2024 Google</span><a href="#terms">Persyaratan</a><a href="#report">Laporkan kesalahan peta</a></div>`;
  }
}

@customElement("app-root")
class AppRoot extends LitElement {
  static styles = css`
    :host { display: flex; flex-direction: column; min-height: 100vh; background: #f8f8fb; color: #212529; font-family: Poppins, Inter, sans-serif; font-size: 16px; line-height: 24px; }
    .container { width: 100%; max-width: 1320px; margin: 0 auto; padding: 0 12px; box-sizing: border-box; }
    h2, h3, h4, p, ul { margin: 0; padding: 0; font-weight: 400; }
    a { color: inherit; text-decoration: none; }
    .contact { padding: 87px 12px 90px; }
    .contact h2 { text-align: center; font-size: 24px; line-height: 32px; }
    .people { display: flex; justify-content: center; margin-top: 23px; }
    .person { width: 267px; display: flex; flex-direction: column; align-items: center; gap: 10px; }
    .big { width: 50px; height: 50px; }
    .footer { flex: 1; background: #17261a; color: #f4e9cd; padding: 28px 0 60px; }
    .columns { display: grid; grid-template-columns: 2fr 1fr 1fr; padding: 0 22px 0 30px; }
    .about { padding-right: 24px; }
    .about h3 { font-size: 28px; line-height: 38px; margin-bottom: 13px; }
    .about p { margin-bottom: 16px; }
    .links h4 { font-size: 20px; line-height: 28px; margin-bottom: 13px; }
    .links ul { list-style: none; display: grid; gap: 5px; }
    .links a { display: flex; align-items: center; gap: 13px; }
    .small { width: 16px; height: 16px; flex: none; }
  `;
  private person(name: string, text: string, href: string) {
    return html`<a class="person" href=${href}>${icon(name, "big")}<span>${text}</span></a>`;
  }
  private links(title: string, items: [string, string, string][]) {
    return html`<nav class="links" aria-label=${title}><h4>${title}</h4><ul>
      ${items.map(([i, t, h]) => html`<li><a href=${h}>${icon(i, "small")}<span>${t}</span></a></li>`)}</ul></nav>`;
  }
  render() {
    return html`
      <div class="container"><map-view></map-view></div>
      <section class="contact">
        <h2>Contact Us</h2>
        <div class="people">
          ${this.person("mailFill", "calvin@email.com", "mailto:calvin@email.com")}
          ${this.person("mailFill", "wo@sharkmail.com", "mailto:wo@sharkmail.com")}
          ${this.person("phoneFill", "+62 2019 1009 2910", "tel:+62201910092910")}
        </div>
      </section>
      <footer class="footer">
        <div class="container columns">
          <div class="about">
            <h3>Wedding Organizer</h3>
            <p>Pondok Cina, Margonda, Depok</p>
            <p>Lorem, ipsum dolor sit amet consectetur adipisicing elit. At, quaerat! Lorem, ipsum dolor sit amet consectetur adipisicing elit. Nihil, possimus.</p>
          </div>
          ${this.links("Contact", [["phone", "+62 2019 1009 2910", "tel:+62201910092910"], ["mail", "calvin@email.com", "mailto:calvin@email.com"], ["mail", "wo@sharkmaiil.com", "mailto:wo@sharkmaiil.com"]])}
          ${this.links("Social", [["instagram", "@wding_organizer", "#instagram"], ["x", "@wding_organizer", "#x"], ["linkedin", "Wedding Organizer", "#linkedin"]])}
        </div>
      </footer>`;
  }
}
